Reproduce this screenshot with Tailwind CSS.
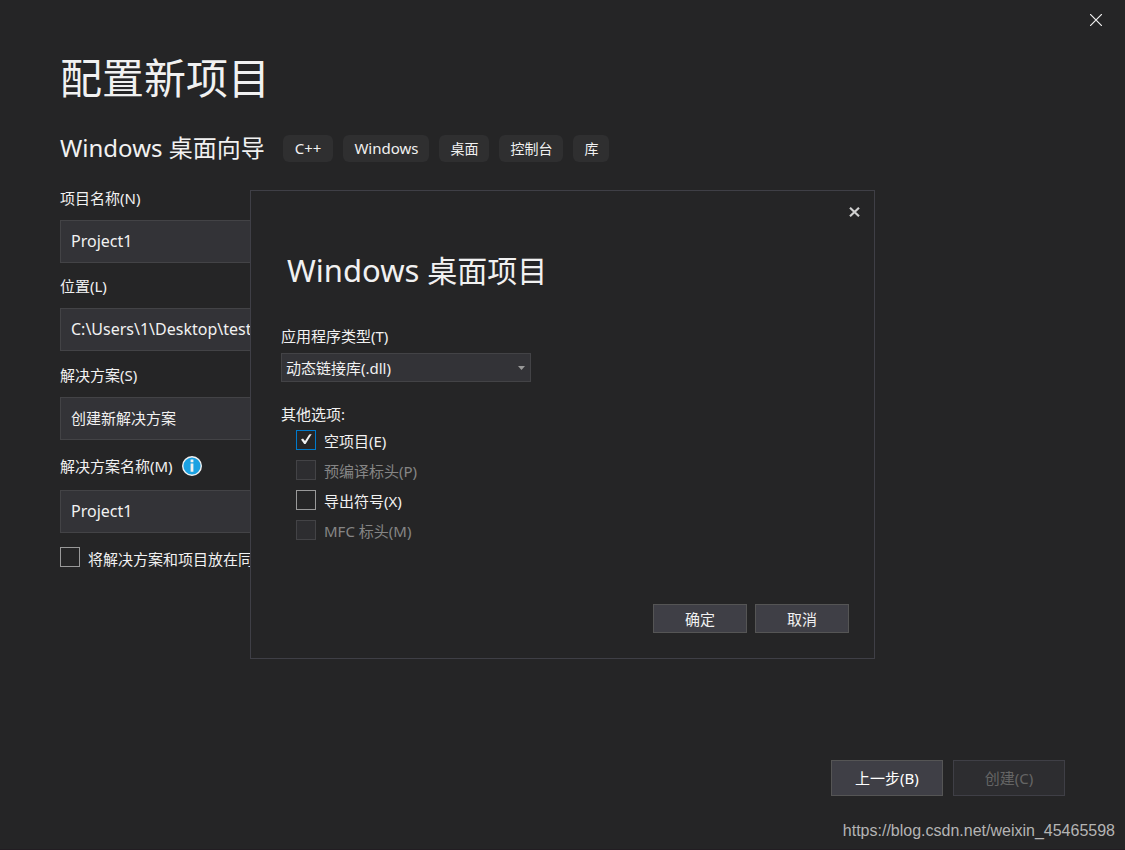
<!DOCTYPE html>
<html lang="zh-CN">
<head>
<meta charset="utf-8">
<title>配置新项目</title>
<script src="https://cdn.jsdelivr.net/npm/@tailwindcss/browser@4"></script>
</head>
<body class="relative flex min-h-screen flex-col border-b border-[#221d22] bg-[#252526] font-['Noto_Sans','Noto_Sans_CJK_SC',sans-serif] text-[15px] leading-5 text-[#f1f1f1]">
  <header class="flex h-10 justify-end pr-[19px]">
    <button type="button" aria-label="关闭窗口" class="flex w-5 items-center justify-center">
      <svg class="size-3" viewBox="0 0 12 12" fill="none" stroke="#f1f1f1" stroke-width="1.2"><path d="M0 0L12 12M12 0L0 12"/></svg>
    </button>
  </header>

  <main class="flex grow flex-col px-[60px]">
    <h1 class="mt-2 text-[42px] leading-[60px]">配置新项目</h1>
    <div class="mt-6 flex items-center gap-[18px]">
      <h2 class="text-2xl leading-8">Windows 桌面向导</h2>
      <ul class="mt-px flex gap-[10px] text-sm leading-[27px]">
        <li class="rounded-md bg-[#2f2f30] px-3 text-[15px] leading-[27px]">C++</li>
        <li class="rounded-md bg-[#2f2f30] px-[11px] text-[15px] leading-[27px]">Windows</li>
        <li class="rounded-md bg-[#2f2f30] px-[11px]">桌面</li>
        <li class="rounded-md bg-[#2f2f30] px-[11px]">控制台</li>
        <li class="rounded-md bg-[#2f2f30] px-[11px]">库</li>
      </ul>
    </div>

    <form class="mt-6 flex w-full max-w-[640px] flex-col">
      <label for="name" class="h-8">项目名称(N)</label>
      <input id="name" value="Project1" class="h-[43px] border border-[#434346] bg-[#333337] px-[10px] pb-0.5 text-base">
      <label for="place" class="mt-[13px] h-8">位置(L)</label>
      <input id="place" value="C:\Users\1\Desktop\test" class="h-[43px] border border-[#434346] bg-[#333337] px-[10px] pb-0.5 text-base">
      <label for="solution" class="mt-[14px] h-8">解决方案(S)</label>
      <select id="solution" class="h-[43px] appearance-none border border-[#434346] bg-[#333337] px-[10px] pb-0.5"><option>创建新解决方案</option></select>
      <div class="mt-4 flex h-[34px] gap-[9px]">
        <label for="solname">解决方案名称(M)</label>
        <svg class="size-5" viewBox="0 0 20 20"><circle cx="10" cy="10" r="9.3" fill="#1ba1e2" stroke="#f1f1f1" stroke-width="1.4"/><path d="M8.6 3.6h2.8v2.6H8.6zM8.6 7.6h2.8v8.2H8.6z" fill="#f1f1f1"/></svg>
      </div>
      <input id="solname" value="Project1" class="h-[43px] border border-[#434346] bg-[#333337] px-[10px] pb-0.5 text-base">
      <div class="mt-[14px] flex gap-2">
        <input id="same" type="checkbox" class="size-5 appearance-none border border-[#999999] bg-[#252526]">
        <label for="same" class="pt-0.5">将解决方案和项目放在同一目录中(D)</label>
      </div>
    </form>

    <div class="mt-auto mb-[53px] flex justify-end gap-[10px]">
      <button type="button" class="h-9 w-28 border border-[#555555] bg-[#3f3f46] text-white">上一步(B)</button>
      <button type="button" disabled class="h-9 w-28 border border-[#3f3f46] bg-[#2d2d30] text-[#656565]">创建(C)</button>
    </div>
  </main>

  <p class="absolute right-[10px] bottom-2 font-['Liberation_Sans',sans-serif] text-base leading-5 text-[#b4b4b4]">https://blog.csdn.net/weixin_45465598</p>

  <div class="fixed inset-0 flex items-center justify-center pb-px">
    <section role="dialog" aria-labelledby="dialog-title" class="flex w-[625px] flex-col border border-[#3f3f46] bg-[#252526] pb-[25px] pl-[30px] pr-[25px]">
      <button type="button" aria-label="关闭" class="mt-[11px] mr-[-11px] flex h-5 w-[11px] items-center justify-center self-end">
        <svg class="h-[10px] w-[11px] shrink-0" viewBox="0 0 11 10" fill="none" stroke="#d0d0d0" stroke-width="2.2"><path d="M1 .8L10 9.2M10 .8L1 9.2"/></svg>
      </button>
      <h2 id="dialog-title" class="mt-7 h-10 pl-[6px] text-3xl leading-10"><span class="text-[31px] leading-10">Windows</span> 桌面项目</h2>
      <label for="apptype" class="mt-9">应用程序类型(T)</label>
      <div class="relative mt-[7px] w-[250px]">
        <select id="apptype" class="h-[29px] w-full appearance-none border border-[#434346] bg-[#333337] px-1"><option>动态链接库(.dll)</option></select>
        <svg class="pointer-events-none absolute top-[13px] right-[6px] h-1 w-[7px]" viewBox="0 0 7 4" fill="#999999"><path d="M0 0h7L3.5 4z"/></svg>
      </div>
      <fieldset class="mt-[22px] flex flex-col">
        <legend>其他选项:</legend>
        <div class="mt-[6px] flex flex-col gap-[10px] pl-[15px]">
          <div class="flex h-5 gap-2">
            <span class="relative size-5"><input id="empty" type="checkbox" checked class="block size-5 appearance-none border border-[#007acc] bg-[#252526]">
              <svg class="pointer-events-none absolute inset-0 size-5" viewBox="0 0 20 20" fill="#f1f1f1"><path d="M5 9.5L7 8.5L9 11L13.2 4.5L15.7 4L9.6 14H8.2Z"/></svg></span>
            <label for="empty" class="pt-px">空项目(E)</label>
          </div>
          <div class="flex h-5 gap-2 text-[#858585]">
            <input id="pch" type="checkbox" disabled class="size-5 appearance-none border border-[#434346] bg-[#2d2d30]">
            <label for="pch" class="pt-px">预编译标头(P)</label>
          </div>
          <div class="flex h-5 gap-2">
            <input id="exp" type="checkbox" class="size-5 appearance-none border border-[#999999] bg-[#252526]">
            <label for="exp" class="pt-px">导出符号(X)</label>
          </div>
          <div class="flex h-5 gap-2 text-[#858585]">
            <input id="mfc" type="checkbox" disabled class="size-5 appearance-none border border-[#434346] bg-[#2d2d30]">
            <label for="mfc" class="pt-px">MFC 标头(M)</label>
          </div>
        </div>
      </fieldset>
      <div class="mt-16 flex justify-end gap-2">
        <button type="button" class="h-[29px] w-[94px] border border-[#555555] bg-[#3f3f46]">确定</button>
        <button type="button" class="h-[29px] w-[94px] border border-[#555555] bg-[#3f3f46]">取消</button>
      </div>
    </section>
  </div>
</body>
</html>
